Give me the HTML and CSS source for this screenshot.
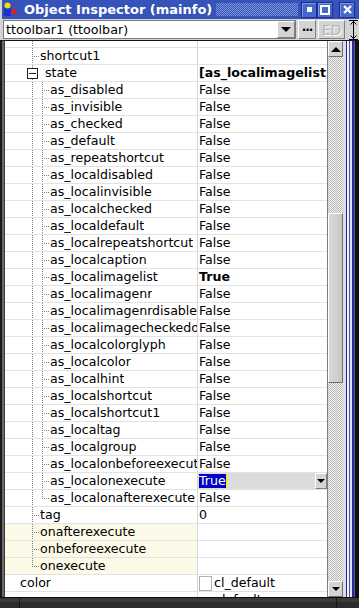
FILE: index.html
```html
<!DOCTYPE html>
<html lang="en">
<head>
    <meta charset="UTF-8">
    <title>Object Inspector (mainfo)</title>
    <link rel="stylesheet" href="styles.css">
</head>
<body>
    <div class="window">
        <div class="titlebar">
            <svg class="appicon" width="14" height="15" viewBox="0 0 14 15">
                <rect x="0" y="6" width="7" height="8" fill="#2030d0"/>
                <circle cx="3.5" cy="3.5" r="3" fill="#f0e000"/>
                <polygon points="6.5,12 10,5 13.5,12" fill="#e02020"/>
            </svg>
            <span class="title">Object Inspector (mainfo)</span>
            <span class="dots"></span>
            <span class="wbtn"><span class="ico-min"></span></span>
            <span class="wbtn"><span class="ico-max"></span></span>
            <span class="wbtn close">
                <svg width="9" height="9" viewBox="0 0 9 9"><path d="M1 1 L8 8 M8 1 L1 8" stroke="#fff" stroke-width="2.4"/></svg>
            </span>
        </div>

        <div class="toolbar">
            <div class="combo">
                <span class="combo-text">ttoolbar1 (ttoolbar)</span>
                <span class="drop"><span class="arrow-down"></span></span>
            </div>
            <span class="tbtn ellipsis">&middot;&middot;&middot;</span>
            <span class="tbtn ed">ED</span>
            <span class="resize">
                <svg width="11" height="20" viewBox="0 0 11 20">
                    <path d="M1 0.5 H10 M5.5 1 V19 M2.5 4.5 L5.5 1.5 L8.5 4.5 M2.5 15.5 L5.5 18.5 L8.5 15.5 M1 19.5 H10" stroke="#000" stroke-width="1" fill="none"/>
                </svg>
            </span>
        </div>

        <div class="inspector">
            <div class="frame-left"></div>
            <div class="grid">
                <div class="row partial"><div class="name"><span class="ind"></span><span class="g pipe"></span></div><div class="val"></div></div>
                <div class="row"><div class="name"><span class="ind"></span><span class="g tee"></span><span class="txt">shortcut1</span></div><div class="val"></div></div>
                <div class="row"><div class="name"><span class="ind2"></span><span class="g boxed"><span class="box"></span></span><span class="txt">state</span></div><div class="val"><span class="txt bold">[as_localimagelist,</span></div></div>
                <div class="row"><div class="name"><span class="ind"></span><span class="g pipe"></span><span class="g tee"></span><span class="txt">as_disabled</span></div><div class="val">False</div></div>
                <div class="row"><div class="name"><span class="ind"></span><span class="g pipe"></span><span class="g tee"></span><span class="txt">as_invisible</span></div><div class="val">False</div></div>
                <div class="row"><div class="name"><span class="ind"></span><span class="g pipe"></span><span class="g tee"></span><span class="txt">as_checked</span></div><div class="val">False</div></div>
                <div class="row"><div class="name"><span class="ind"></span><span class="g pipe"></span><span class="g tee"></span><span class="txt">as_default</span></div><div class="val">False</div></div>
                <div class="row"><div class="name"><span class="ind"></span><span class="g pipe"></span><span class="g tee"></span><span class="txt">as_repeatshortcut</span></div><div class="val">False</div></div>
                <div class="row"><div class="name"><span class="ind"></span><span class="g pipe"></span><span class="g tee"></span><span class="txt">as_localdisabled</span></div><div class="val">False</div></div>
                <div class="row"><div class="name"><span class="ind"></span><span class="g pipe"></span><span class="g tee"></span><span class="txt">as_localinvisible</span></div><div class="val">False</div></div>
                <div class="row"><div class="name"><span class="ind"></span><span class="g pipe"></span><span class="g tee"></span><span class="txt">as_localchecked</span></div><div class="val">False</div></div>
                <div class="row"><div class="name"><span class="ind"></span><span class="g pipe"></span><span class="g tee"></span><span class="txt">as_localdefault</span></div><div class="val">False</div></div>
                <div class="row"><div class="name"><span class="ind"></span><span class="g pipe"></span><span class="g tee"></span><span class="txt">as_localrepeatshortcut</span></div><div class="val">False</div></div>
                <div class="row"><div class="name"><span class="ind"></span><span class="g pipe"></span><span class="g tee"></span><span class="txt">as_localcaption</span></div><div class="val">False</div></div>
                <div class="row"><div class="name"><span class="ind"></span><span class="g pipe"></span><span class="g tee"></span><span class="txt">as_localimagelist</span></div><div class="val bold">True</div></div>
                <div class="row"><div class="name"><span class="ind"></span><span class="g pipe"></span><span class="g tee"></span><span class="txt">as_localimagenr</span></div><div class="val">False</div></div>
                <div class="row"><div class="name"><span class="ind"></span><span class="g pipe"></span><span class="g tee"></span><span class="txt">as_localimagenrdisabled</span></div><div class="val">False</div></div>
                <div class="row"><div class="name"><span class="ind"></span><span class="g pipe"></span><span class="g tee"></span><span class="txt">as_localimagecheckedoffset</span></div><div class="val">False</div></div>
                <div class="row"><div class="name"><span class="ind"></span><span class="g pipe"></span><span class="g tee"></span><span class="txt">as_localcolorglyph</span></div><div class="val">False</div></div>
                <div class="row"><div class="name"><span class="ind"></span><span class="g pipe"></span><span class="g tee"></span><span class="txt">as_localcolor</span></div><div class="val">False</div></div>
                <div class="row"><div class="name"><span class="ind"></span><span class="g pipe"></span><span class="g tee"></span><span class="txt">as_localhint</span></div><div class="val">False</div></div>
                <div class="row"><div class="name"><span class="ind"></span><span class="g pipe"></span><span class="g tee"></span><span class="txt">as_localshortcut</span></div><div class="val">False</div></div>
                <div class="row"><div class="name"><span class="ind"></span><span class="g pipe"></span><span class="g tee"></span><span class="txt">as_localshortcut1</span></div><div class="val">False</div></div>
                <div class="row"><div class="name"><span class="ind"></span><span class="g pipe"></span><span class="g tee"></span><span class="txt">as_localtag</span></div><div class="val">False</div></div>
                <div class="row"><div class="name"><span class="ind"></span><span class="g pipe"></span><span class="g tee"></span><span class="txt">as_localgroup</span></div><div class="val">False</div></div>
                <div class="row"><div class="name"><span class="ind"></span><span class="g pipe"></span><span class="g tee"></span><span class="txt">as_localonbeforeexecute</span></div><div class="val">False</div></div>
                <div class="row"><div class="name"><span class="ind"></span><span class="g pipe"></span><span class="g tee"></span><span class="txt">as_localonexecute</span></div>
                    <div class="val editing"><span class="sel">True</span><span class="caret"></span><span class="vdrop"><span class="arrow-down"></span></span></div></div>
                <div class="row"><div class="name"><span class="ind"></span><span class="g pipe"></span><span class="g end"></span><span class="txt">as_localonafterexecute</span></div><div class="val">False</div></div>
                <div class="row"><div class="name"><span class="ind"></span><span class="g tee"></span><span class="txt">tag</span></div><div class="val">0</div></div>
                <div class="row event"><div class="name"><span class="ind"></span><span class="g tee"></span><span class="txt">onafterexecute</span></div><div class="val"></div></div>
                <div class="row event"><div class="name"><span class="ind"></span><span class="g tee"></span><span class="txt">onbeforeexecute</span></div><div class="val"></div></div>
                <div class="row event"><div class="name"><span class="ind"></span><span class="g end"></span><span class="txt">onexecute</span></div><div class="val"></div></div>
                <div class="row"><div class="name"><span class="ind3"></span><span class="txt">color</span></div><div class="val"><span class="swatch"></span>cl_default</div></div>
                <div class="row"><div class="name"><span class="ind3"></span><span class="txt">cursor</span></div><div class="val">cr_default</div></div>
            </div>
            <div class="scroll">
                <span class="sbtn"><span class="arrow-up"></span></span>
                <span class="thumb"></span>
                <span class="track-rest"></span>
                <span class="sbtn"><span class="arrow-down small"></span></span>
            </div>
            <div class="stripes"></div>
        </div>

        <div class="statusbar">
            <span class="seg first"></span>
            <span class="seg mid"></span>
            <span class="seg last"></span>
        </div>
    </div>
</body>
</html>
```

FILE: styles.css
```css
* {
    margin: 0;
    padding: 0;
    box-sizing: border-box;
}

body {
    font-family: 'DejaVu Sans', 'Liberation Sans', sans-serif;
    background-color: #d4d4d4;
    width: 359px;
    height: 608px;
    overflow: hidden;
    color: #000;
}

.window {
    display: flex;
    flex-direction: column;
    height: 608px;
}

/* title bar */
.titlebar {
    height: 19px;
    margin-left: 2px;
    display: flex;
    align-items: center;
    background-color: #3553b9;
    flex: none;
}

.appicon {
    margin-left: 2px;
    flex: none;
}

.title {
    margin-left: 6px;
    color: #fff;
    font-weight: bold;
    font-size: 13px;
    line-height: 19px;
    white-space: nowrap;
}

.dots {
    flex: 1;
    height: 13px;
    margin: 0 3px 0 4px;
    background: repeating-conic-gradient(#7f95dc 0 25%, #3553b9 0 50%) 0 0 / 2px 2px;
}

.wbtn {
    width: 16px;
    height: 16px;
    border: 1px solid #1c2f86;
    background-color: #4667cf;
    box-shadow: inset 1px 1px 0 #7f97e4;
    display: flex;
    align-items: center;
    justify-content: center;
    flex: none;
}

.wbtn.close {
    margin-left: 6px;
    margin-right: 4px;
}

.ico-min {
    width: 5px;
    height: 5px;
    background-color: #fff;
}

.ico-max {
    width: 10px;
    height: 10px;
    border: 2px solid #fff;
}

/* toolbar with component selector */
.toolbar {
    height: 21px;
    display: flex;
    align-items: center;
    padding-left: 3px;
    flex: none;
}

.combo {
    width: 294px;
    height: 19px;
    border: 1px solid #7a7a7a;
    background-color: #fff;
    display: flex;
    align-items: center;
}

.combo-text {
    flex: 1;
    font-size: 12.7px;
    padding-left: 2px;
    white-space: nowrap;
}

.drop {
    width: 18px;
    height: 17px;
    background-color: #d4d4d4;
    border: 1px solid;
    border-color: #fff #808080 #808080 #fff;
    display: flex;
    align-items: center;
    justify-content: center;
}

.arrow-down {
    width: 0;
    height: 0;
    border-left: 5px solid transparent;
    border-right: 5px solid transparent;
    border-top: 5px solid #000;
}

.arrow-down.small {
    border-left-width: 4px;
    border-right-width: 4px;
    border-top-width: 4px;
}

.arrow-up {
    width: 0;
    height: 0;
    border-left: 5px solid transparent;
    border-right: 5px solid transparent;
    border-bottom: 5px solid #000;
}

.tbtn {
    height: 19px;
    margin-left: 2px;
    background-color: #d4d4d4;
    border: 1px solid;
    border-color: #fff #808080 #808080 #fff;
    display: flex;
    align-items: center;
    justify-content: center;
}

.ellipsis {
    width: 18px;
    font-weight: bold;
    font-size: 12px;
    letter-spacing: -1px;
}

.ed {
    width: 27px;
    font-size: 14px;
    color: #b4b4b4;
    text-shadow: 1px 1px 0 #fff;
}

.resize {
    margin-left: 3px;
    height: 21px;
    display: flex;
    align-items: center;
}

/* inspector grid */
.inspector {
    flex: none;
    height: 557px;
    display: flex;
    border-top: 1px solid #151515;
}

.frame-left {
    width: 5px;
    background-color: #1a1a1a;
    border-right: 1px solid #3a3a3a;
    box-shadow: inset -2px 0 0 #6a6a6a;
    flex: none;
}

.grid {
    width: 322px;
    background-color: #fff;
    overflow: hidden;
    flex: none;
}

.row {
    height: 17px;
    display: flex;
    border-bottom: 1px solid #e2e2e2;
    font-size: 12.6px;
    line-height: 16px;
}

.row.partial {
    height: 7px;
}

.name {
    width: 193px;
    display: flex;
    border-right: 1px solid #d6d6d6;
    overflow: hidden;
    white-space: nowrap;
    flex: none;
}

.row.event .name {
    background-color: #fdf9e7;
}

.val {
    flex: 1;
    min-width: 0;
    padding-left: 1px;
    white-space: nowrap;
    overflow: hidden;
    display: flex;
    align-items: center;
}

.bold {
    font-weight: bold;
}

.ind {
    width: 27px;
    flex: none;
}

.ind2 {
    width: 22px;
    flex: none;
}

.ind3 {
    width: 15px;
    flex: none;
}

.txt {
    flex: 0 1 auto;
    min-width: 0;
    overflow: hidden;
    text-overflow: clip;
}

/* tree guide lines */
.g {
    flex: none;
}

.pipe {
    width: 10px;
    background: repeating-linear-gradient(to bottom, #808080 0 1px, transparent 1px 2px) 0 0 / 1px 100% no-repeat;
}

.tee {
    width: 8px;
    background:
        repeating-linear-gradient(to bottom, #808080 0 1px, transparent 1px 2px) 0 0 / 1px 100% no-repeat,
        repeating-linear-gradient(to right, #808080 0 1px, transparent 1px 2px) 0 8px / 100% 1px no-repeat;
}

.end {
    width: 8px;
    background:
        repeating-linear-gradient(to bottom, #808080 0 1px, transparent 1px 2px) 0 0 / 1px 9px no-repeat,
        repeating-linear-gradient(to right, #808080 0 1px, transparent 1px 2px) 0 8px / 100% 1px no-repeat;
}

.boxed {
    width: 18px;
    display: flex;
    align-items: center;
    background: repeating-linear-gradient(to bottom, #808080 0 1px, transparent 1px 2px) 5px 0 / 1px 100% no-repeat;
}

.box {
    width: 11px;
    height: 11px;
    border: 1px solid #202020;
    background: linear-gradient(#202020, #202020) center / 7px 1px no-repeat, #fff;
}

/* edited cell */
.val.editing {
    background-color: #dcdcdc;
    padding-left: 1px;
}

.sel {
    background-color: #0000c4;
    color: #fff;
    line-height: 14px;
}

.caret {
    width: 1px;
    height: 14px;
    background-color: #f0f000;
}

.vdrop {
    margin-left: auto;
    width: 12px;
    height: 16px;
    background-color: #d4d4d4;
    border: 1px solid;
    border-color: #fff #808080 #808080 #fff;
    display: flex;
    align-items: center;
    justify-content: center;
}

.vdrop .arrow-down {
    border-left-width: 4px;
    border-right-width: 4px;
    border-top-width: 4px;
}

.swatch {
    width: 13px;
    height: 15px;
    border: 1px solid #b0b0b0;
    background-color: #fff;
    margin-right: 2px;
    flex: none;
}

/* scrollbar */
.scroll {
    width: 16px;
    border-left: 1px solid #7c7c7c;
    display: flex;
    flex-direction: column;
    background: repeating-conic-gradient(#b8b8b8 0 25%, #f2f2f2 0 50%) 0 0 / 2px 2px;
    flex: none;
}

.sbtn {
    height: 16px;
    background-color: #d4d4d4;
    border: 1px solid;
    border-color: #fff #707070 #707070 #fff;
    display: flex;
    align-items: center;
    justify-content: center;
    flex: none;
}

.thumb {
    margin-top: 156px;
    height: 170px;
    background: linear-gradient(to right, #dadada, #c6c6c6);
    border: 1px solid;
    border-color: #fff #6e6e6e #6e6e6e #fff;
    flex: none;
}

.track-rest {
    flex: 1;
}

.stripes {
    width: 16px;
    flex: none;
    background: linear-gradient(to right,
        #dcdce4 0 3px,
        #26269c 3px 4px,
        #f2f2f8 4px 6px,
        #4a4ab8 6px 7px,
        #e4e4f0 7px 9px,
        #2a2aa2 9px 11px,
        #5a5a78 11px 12px,
        #101010 12px 16px);
}

/* bottom frame */
.statusbar {
    flex: 1;
    display: flex;
    background-color: #2c2c2c;
    border-top: 1px solid #0c0c0c;
}

.seg {
    border-right: 1px solid #181818;
    box-shadow: inset 0 4px 0 #3a3a3a;
}

.seg.first {
    width: 20px;
}

.seg.mid {
    width: 317px;
}

.seg.last {
    flex: 1;
    border-right: none;
}
```
